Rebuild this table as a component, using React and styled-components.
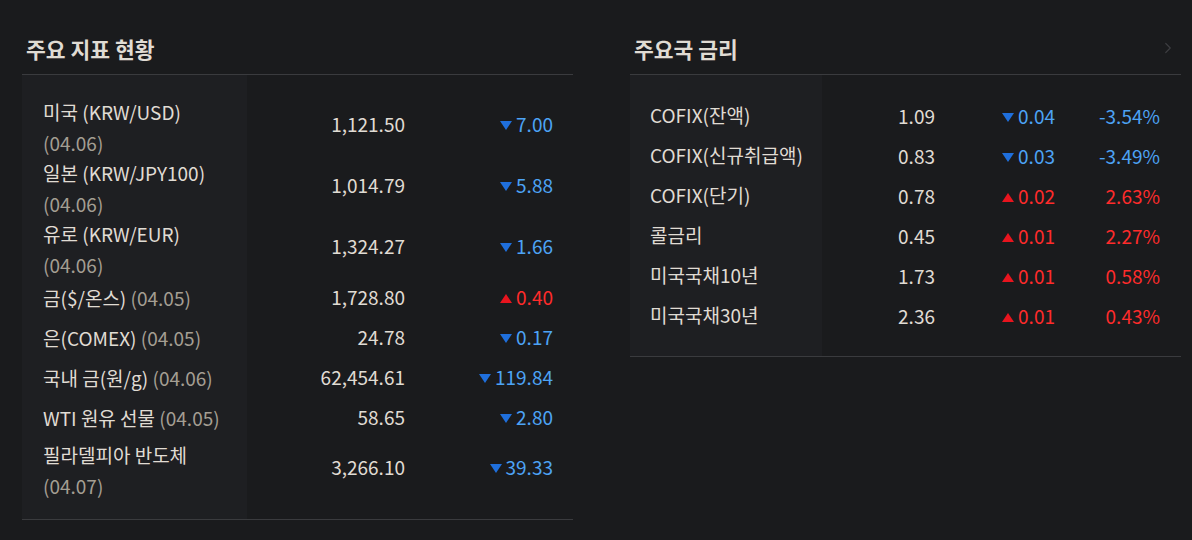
import * as React from 'react';
import styled, { createGlobalStyle } from 'styled-components';
import { ChevronRight } from 'lucide-react';

const indicators = [
  { name: '미국 (KRW/USD)', date: '04.06', wrap: true, value: '1,121.50', change: '7.00', dir: 'down' },
  { name: '일본 (KRW/JPY100)', date: '04.06', wrap: true, value: '1,014.79', change: '5.88', dir: 'down' },
  { name: '유로 (KRW/EUR)', date: '04.06', wrap: true, value: '1,324.27', change: '1.66', dir: 'down' },
  { name: '금($/온스)', date: '04.05', value: '1,728.80', change: '0.40', dir: 'up' },
  { name: '은(COMEX)', date: '04.05', value: '24.78', change: '0.17', dir: 'down' },
  { name: '국내 금(원/g)', date: '04.06', value: '62,454.61', change: '119.84', dir: 'down' },
  { name: 'WTI 원유 선물', date: '04.05', value: '58.65', change: '2.80', dir: 'down' },
  { name: '필라델피아 반도체', date: '04.07', wrap: true, value: '3,266.10', change: '39.33', dir: 'down' },
];

const rates = [
  { name: 'COFIX(잔액)', value: '1.09', change: '0.04', pct: '-3.54%', dir: 'down' },
  { name: 'COFIX(신규취급액)', value: '0.83', change: '0.03', pct: '-3.49%', dir: 'down' },
  { name: 'COFIX(단기)', value: '0.78', change: '0.02', pct: '2.63%', dir: 'up' },
  { name: '콜금리', value: '0.45', change: '0.01', pct: '2.27%', dir: 'up' },
  { name: '미국국채10년', value: '1.73', change: '0.01', pct: '0.58%', dir: 'up' },
  { name: '미국국채30년', value: '2.36', change: '0.01', pct: '0.43%', dir: 'up' },
];

export default function App() {
  return (
    <>
      <GlobalStyle />
      <Page>
        <Panel>
          <Header>
            <Title>주요 지표 현황</Title>
          </Header>
          <Body $labelWidth={225} $pad="18px 0 22px">
            <Table>
              <colgroup>
                <col style={{ width: 225 }} />
                <col style={{ width: 158 }} />
                <col style={{ width: 148 }} />
                <col style={{ width: 20 }} />
              </colgroup>
              <tbody>
                {indicators.map((row) => (
                  <tr key={row.name}>
                    <Label $indent={21}>
                      <LabelText $shift={row.wrap ? 4 : 2}>
                        {row.name} <DateText $block={row.wrap}>({row.date})</DateText>
                      </LabelText>
                    </Label>
                    <Num>{row.value}</Num>
                    <Change $dir={row.dir}>
                      <Arrow $dir={row.dir} />
                      {row.change}
                    </Change>
                    <td />
                  </tr>
                ))}
              </tbody>
            </Table>
          </Body>
        </Panel>

        <Panel>
          <Header>
            <Title>주요국 금리</Title>
            <More aria-label="더보기">
              <ChevronRight size={18} strokeWidth={1.6} />
            </More>
          </Header>
          <Body $labelWidth={192} $pad="20px 0 21px">
            <Table>
              <colgroup>
                <col style={{ width: 192 }} />
                <col style={{ width: 113 }} />
                <col style={{ width: 120 }} />
                <col style={{ width: 105 }} />
                <col style={{ width: 21 }} />
              </colgroup>
              <tbody>
                {rates.map((row) => (
                  <tr key={row.name}>
                    <Label $indent={20}>
                      <LabelText $shift={0}>{row.name}</LabelText>
                    </Label>
                    <Num>{row.value}</Num>
                    <Change $dir={row.dir}>
                      <Arrow $dir={row.dir} />
                      {row.change}
                    </Change>
                    <Change $dir={row.dir}>{row.pct}</Change>
                    <td />
                  </tr>
                ))}
              </tbody>
            </Table>
          </Body>
        </Panel>
      </Page>
    </>
  );
}

const GlobalStyle = createGlobalStyle`
  html, body {
    margin: 0;
    background: #1a1b1d;
  }
  body {
    font-family: "Noto Sans CJK KR", "Noto Sans", sans-serif;
    color: #e0dcd4;
  }
`;

const Page = styled.div`
  display: flex;
  gap: 57px;
  padding: 22px 0 0 22px;
  min-height: 518px;
  background: #1a1b1d;
`;

const Panel = styled.section`
  width: 551px;
  display: flex;
  flex-direction: column;
  align-self: flex-start;
  border-bottom: 1px solid #3a3b3e;
`;

const Header = styled.div`
  height: 52px;
  display: flex;
  align-items: center;
  justify-content: space-between;
  padding: 0 4px;
  border-bottom: 1px solid #3a3b3e;
`;

const Title = styled.h2`
  margin: 0;
  font-size: 21.5px;
  font-weight: 700;
  color: #e0dcd4;
`;

const More = styled.span`
  display: flex;
  color: #3c3d40;
`;

const Body = styled.div`
  padding: ${(p) => p.$pad};
  background: linear-gradient(
    to right,
    #1e1f22 0,
    #1e1f22 ${(p) => p.$labelWidth}px,
    transparent ${(p) => p.$labelWidth}px
  );
`;

const Table = styled.table`
  width: 100%;
  border-collapse: collapse;
  table-layout: fixed;
  font-size: 19px;

  tr {
    height: 40px;
  }
  td {
    padding: 0;
    vertical-align: middle;
  }
`;

const Label = styled.td`
  padding-left: ${(p) => p.$indent}px !important;
  line-height: 30.5px;
  color: #e0dcd4;
  white-space: nowrap;
`;

const LabelText = styled.div`
  position: relative;
  top: ${(p) => p.$shift}px;
`;

const DateText = styled.span`
  display: ${(p) => (p.$block ? 'block' : 'inline')};
  color: #a49e93;
`;

const Num = styled.td`
  text-align: right;
  color: #e0dcd4;
`;

const Change = styled.td`
  text-align: right;
  white-space: nowrap;
  color: ${(p) => (p.$dir === 'up' ? '#ff2b2b' : '#4da3f5')};
`;

const Arrow = styled.span`
  display: inline-block;
  width: 0;
  height: 0;
  margin-right: 4px;
  vertical-align: 2px;
  border-left: 6px solid transparent;
  border-right: 6px solid transparent;
  ${(p) =>
    p.$dir === 'up'
      ? 'border-bottom: 9px solid #e8141e;'
      : 'border-top: 9px solid #1f6fdc;'}
`;
